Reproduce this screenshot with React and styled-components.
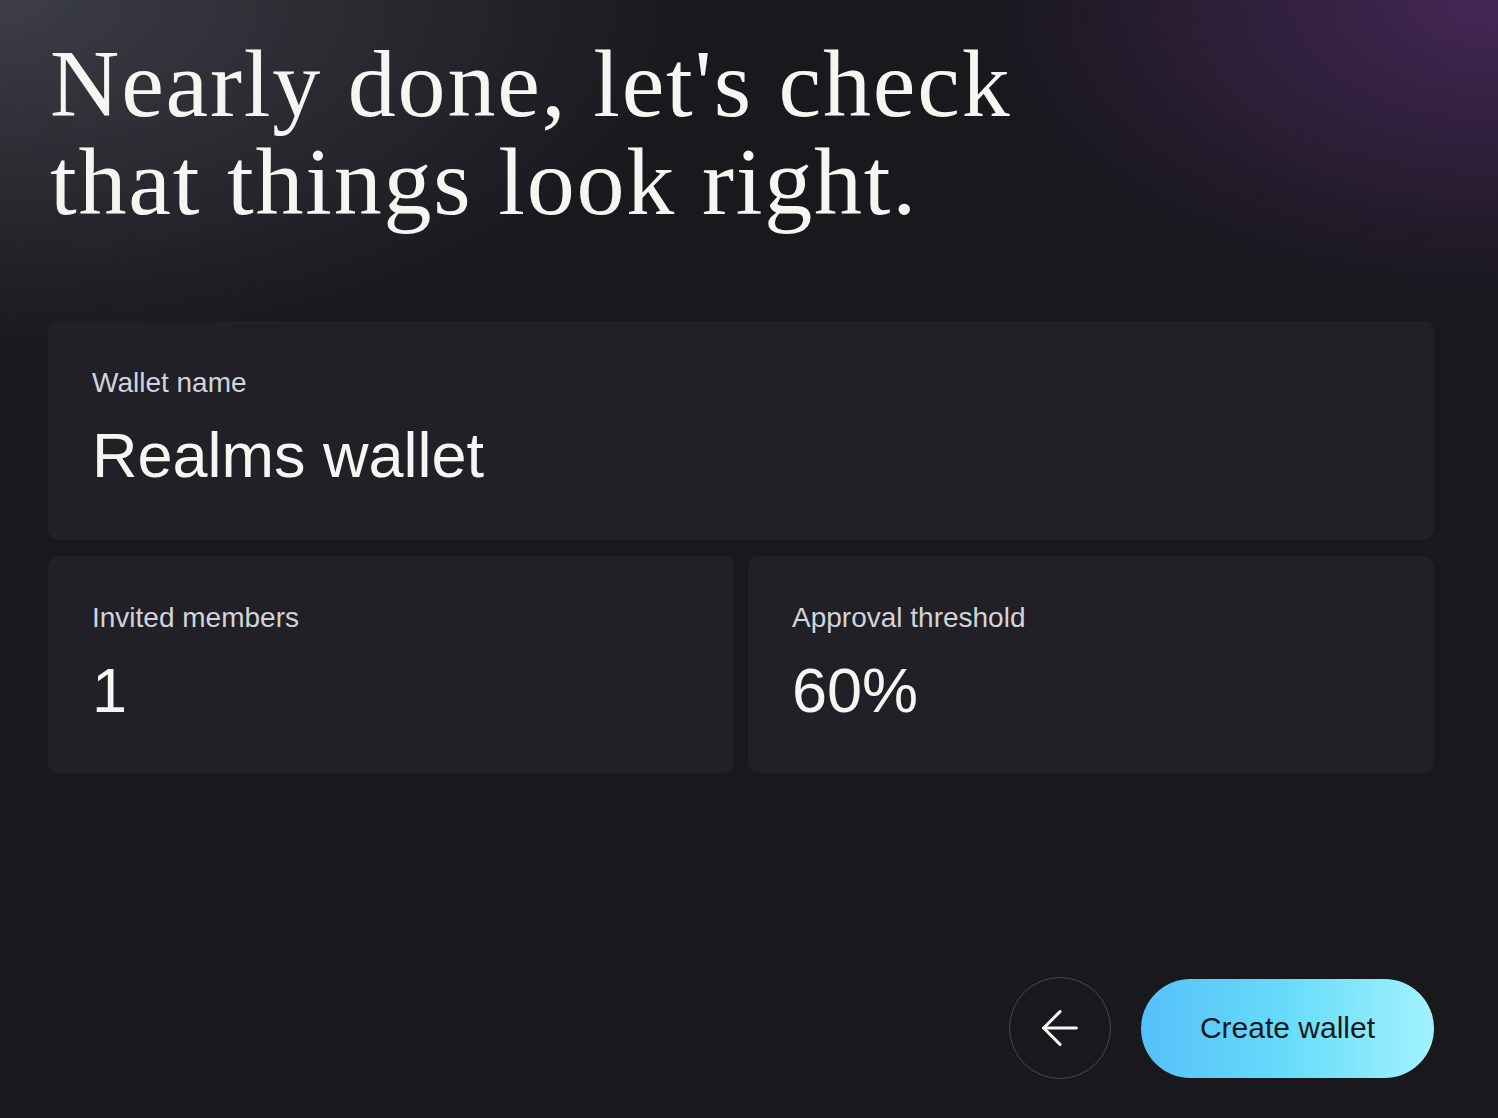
import styled, { createGlobalStyle } from 'styled-components'
import { ArrowLeft } from 'lucide-react'

const GlobalStyle = createGlobalStyle`
  html, body {
    margin: 0;
    padding: 0;
    background: #18181d;
  }
  * {
    box-sizing: border-box;
  }
`

const Page = styled.main`
  min-height: 100vh;
  display: flex;
  flex-direction: column;
  padding: 35px 64px 39px 48px;
  background:
    radial-gradient(ellipse 520px 300px at 100% 0%, rgba(88, 44, 112, 0.7), rgba(88, 44, 112, 0) 100%),
    radial-gradient(ellipse 700px 360px at 0% 0%, rgba(70, 72, 80, 0.8), rgba(70, 72, 80, 0) 100%),
    #18181d;
  font-family: 'Liberation Sans', Arial, sans-serif;
`

const Heading = styled.h1`
  margin: 0 0 90px 2px;
  font-family: 'Liberation Serif', 'Times New Roman', serif;
  font-weight: 400;
  font-size: 96px;
  line-height: 98px;
  color: #f6f5f1;
  letter-spacing: 1.8px;
`

const Summary = styled.section`
  display: grid;
  grid-template-columns: 1fr 1fr;
  column-gap: 14px;
  row-gap: 16px;
`

const Card = styled.div`
  grid-column: ${(p) => (p.$wide ? '1 / -1' : 'auto')};
  height: ${(p) => (p.$wide ? '219px' : '217px')};
  background: #202026;
  border-radius: 10px;
  padding: 44px 44px 0;
  display: flex;
  flex-direction: column;
  gap: 18px;
`

const Label = styled.span`
  font-size: 28px;
  line-height: 36px;
  color: #d3d4da;
`

const Value = styled.span`
  font-size: 63px;
  line-height: 72px;
  color: #f6f5f1;
`

const Actions = styled.div`
  margin-top: auto;
  display: flex;
  justify-content: flex-end;
  align-items: center;
  gap: 30px;
`

const BackButton = styled.button`
  width: 102px;
  height: 102px;
  border-radius: 50%;
  border: 1px solid #46464c;
  background: transparent;
  color: #f6f5f1;
  display: flex;
  align-items: center;
  justify-content: center;
  padding: 0;
  cursor: pointer;
`

const PrimaryButton = styled.button`
  width: 293px;
  height: 99px;
  border: none;
  border-radius: 50px;
  background: linear-gradient(90deg, #55c0f9 0%, #67dcfa 50%, #a2f2fc 100%);
  color: #18181d;
  font-family: 'Liberation Sans', Arial, sans-serif;
  font-size: 30px;
  cursor: pointer;
`

export default function App() {
  return (
    <>
      <GlobalStyle />
      <Page>
        <Heading>
          Nearly done, let's check
          <br />
          that things look right.
        </Heading>
        <Summary>
          <Card $wide>
            <Label>Wallet name</Label>
            <Value>Realms wallet</Value>
          </Card>
          <Card>
            <Label>Invited members</Label>
            <Value>1</Value>
          </Card>
          <Card>
            <Label>Approval threshold</Label>
            <Value>60%</Value>
          </Card>
        </Summary>
        <Actions>
          <BackButton aria-label="Back">
            <ArrowLeft size={56} strokeWidth={1.3} />
          </BackButton>
          <PrimaryButton>Create wallet</PrimaryButton>
        </Actions>
      </Page>
    </>
  )
}
